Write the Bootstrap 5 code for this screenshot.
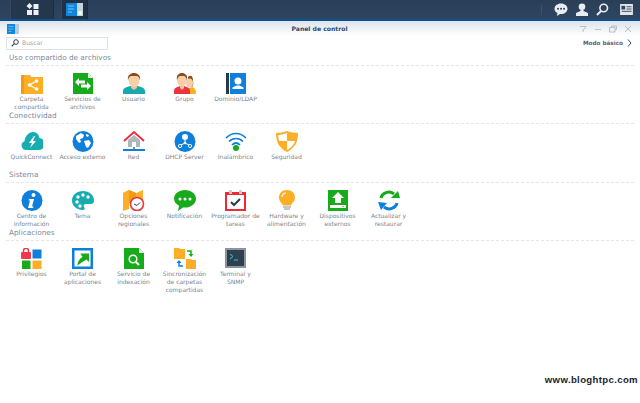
<!DOCTYPE html>
<html lang="es">
<head>
  <meta charset="UTF-8" />
  <title>Panel de control</title>
  <meta name="viewport" content="width=device-width, initial-scale=1" />
  <link href="https://cdn.jsdelivr.net/npm/bootstrap@5.3.0/dist/css/bootstrap.min.css" rel="stylesheet" />
  <style>
    html, body { height: 100%; }
    body { background: #fff; font-family: "DejaVu Sans", Verdana, sans-serif; overflow: hidden; }
    .page { height: 403px; }
    .taskbar { height: 21px; flex: none; background: linear-gradient(#2a3f57, #2f4560); border-bottom: 2px solid #0e4f8c; padding-left: 10px; }
    .task-btn { height: 19px; background: #24374d; border-left: 1px solid #34495f; border-right: 1px solid #1c2c3e; }
    .task-home { width: 44px; }
    .task-app { width: 27px; margin-left: 7px; background: #1f3146; }
    .task-right { gap: 7px; padding-right: 7px; }
    .task-sep { width: 1px; height: 10px; background: #405468; margin-right: 5px; }
    .win-head { height: 15px; flex: none; background: linear-gradient(#dde3eb, #fff); padding: 0 8px 0 7px; }
    .win-side { flex: 1 1 0; }
    .win-title { font-size: 6.1px; font-weight: 700; color: #2f4a6d; }
    .win-ctrl { gap: 7px; }
    .tools { height: 14px; flex: none; padding: 0 8px 0 6px; }
    .search-box { width: 102px; height: 13px; border: 1px solid #dfe3e7; padding-left: 4px; gap: 3px; font-size: 6.1px; color: #a0a6ad; }
    .basic-link { font-size: 5.7px; font-weight: 700; color: #565f74; gap: 4px; }
    .groups { padding: 0 6px; }
    .grp { height: 58.3px; }
    .grp-title { font-size: 7.3px; line-height: 12px; color: #7d8a99; padding: 2px 3px 0; border-bottom: 1px dashed #e4e7ea; height: 16px; }
    .grp-items { padding-top: 7px; }
    .tile { width: 51px; flex: none; text-align: center; font-size: 6px; line-height: 8px; color: #7d858e; }
    .tile svg { display: block; margin: 0 auto 1px; }
    .stamp { font-family: "Liberation Sans", Arial, sans-serif; font-weight: 700; font-size: 9.6px; letter-spacing: .35px; color: #1b2430; padding: 0 2px 16px 0; }
  </style>
</head>
<body>
<div class="page d-flex flex-column">

  <!-- barra superior -->
  <div class="taskbar d-flex align-items-center">
    <div class="task-btn task-home d-flex align-items-center justify-content-center">
      <svg width="13" height="13" viewBox="0 0 13 13"><path d="M3.500 0l3 3-3 3-3-3z" fill="#eef1f4"/><rect x="7.500" y="1" width="5" height="5" fill="#eef1f4"/><rect x="1" y="7" width="5" height="5" fill="#eef1f4"/><rect x="7.500" y="7" width="5" height="5" fill="#eef1f4"/></svg>
    </div>
    <div class="task-btn task-app d-flex align-items-center justify-content-center">
      <svg width="17" height="13" viewBox="0 0 17 13"><rect width="11" height="13" fill="#0f86dc"/><rect x="11" width="6" height="13" fill="#c5d3da"/><rect x="12" y="8" width="4" height="4" fill="#eef2f4"/><path d="M2 3h6M2 6h6M2 9h4" stroke="#7cc2f2"/></svg>
    </div>
    <div class="task-right d-flex align-items-center ms-auto">
      <div class="task-sep"></div>
      <svg width="14" height="13" viewBox="0 0 14 13"><path d="M7 .5c3.700 0 6.500 2.300 6.500 5.200S10.700 11 7 11l-1-.1L3 13l.4-3C1.500 9 .5 7.500 .5 5.700.5 2.800 3.300 .5 7 .5z" fill="#e8edf2"/><circle cx="4" cy="5.700" r="1" fill="#2f4560"/><circle cx="7" cy="5.700" r="1" fill="#2f4560"/><circle cx="10" cy="5.700" r="1" fill="#2f4560"/></svg>
      <svg width="14" height="13" viewBox="0 0 14 13"><circle cx="7" cy="3.700" r="3.300" fill="#e8edf2"/><path d="M5.500 6.500h3v1.500l4.500 2v3H1v-3l4.500-2z" fill="#e8edf2"/></svg>
      <svg width="13" height="13" viewBox="0 0 13 13"><circle cx="7.700" cy="5" r="3.800" fill="none" stroke="#e8edf2" stroke-width="1.600"/><path d="M5 8l-4 4" stroke="#e8edf2" stroke-width="2"/></svg>
      <svg width="13" height="11" viewBox="0 0 14 12" class="ms-1"><rect width="14" height="12" fill="#dfe5ea"/><rect x="1.500" y="2" width="4" height="4" fill="#2f4560"/><path d="M7 3h5.500M7 5.500h5.500M2 8h10.500" stroke="#2f4560"/></svg>
    </div>
  </div>

  <!-- cabecera de la ventana -->
  <div class="win-head d-flex align-items-center">
    <div class="win-side d-flex">
      <svg width="12" height="10" viewBox="0 0 12 10"><rect width="8" height="10" fill="#0f86dc"/><rect x="8" width="4" height="10" fill="#b9cbd5"/><path d="M1.500 2.500h5M1.500 5h5M1.500 7.500h3" stroke="#7cc2f2" stroke-width=".8"/></svg>
    </div>
    <div class="win-title">Panel de control</div>
    <div class="win-side win-ctrl d-flex align-items-center justify-content-end">
      <svg width="8" height="8" viewBox="0 0 8 8"><path d="M1 1.500h6v1L4 5v2" fill="none" stroke="#b7bec6"/></svg>
      <svg width="8" height="8" viewBox="0 0 8 8"><path d="M1 4.500h6" stroke="#b7bec6"/></svg>
      <svg width="8" height="8" viewBox="0 0 8 8"><path d="M2.500 2.500v-1.500h5v3.500H6M.5 2.500h5.500v4.500H.5z" fill="none" stroke="#b7bec6"/></svg>
      <svg width="8" height="8" viewBox="0 0 8 8"><path d="M1 1l6 6M7 1L1 7" stroke="#b7bec6"/></svg>
    </div>
  </div>

  <!-- buscar y modo -->
  <div class="tools d-flex align-items-center justify-content-between">
    <div class="search-box d-flex align-items-center">
      <svg width="8" height="8" viewBox="0 0 8 8"><circle cx="5" cy="3" r="2.300" fill="none" stroke="#2f3d4d"/><path d="M3.300 4.700L.7 7.300" stroke="#2f3d4d" stroke-width="1.200"/></svg>
      Buscar
    </div>
    <div class="basic-link d-flex align-items-center">
      Modo básico
      <svg width="5" height="8" viewBox="0 0 5 8"><path d="M1 .5L4 4 1 7.500" fill="none" stroke="#24507f"/></svg>
    </div>
  </div>

  <div class="groups">

    <div class="grp">
      <div class="grp-title">Uso compartido de archivos</div>
      <div class="grp-items d-flex">
        <div class="tile">
          <svg width="22" height="21" viewBox="0 0 22 21"><path d="M0 2h9l1 2h12v17H0z" fill="#fdae27"/><path d="M0 2h3v19H0z" fill="#f59a18"/><path d="M15.500 8L8.500 12l7 4" fill="none" stroke="#fff" stroke-width="1.200"/><circle cx="15.500" cy="8" r="1.800" fill="#fff"/><circle cx="8.500" cy="12" r="1.800" fill="#fff"/><circle cx="15.500" cy="16" r="1.800" fill="#fff"/></svg>
          Carpeta compartida
        </div>
        <div class="tile">
          <svg width="22" height="21" viewBox="0 0 22 21"><path d="M1 0h15l5 5v16H1z" fill="#17ab1c"/><path d="M16 0l5 5h-5z" fill="#e7f5e7"/><path d="M3 9l4-4v2.500h6v3H7V13zM19 13l-4 4v-2.500H9v-3h6V9z" fill="#fff"/></svg>
          Servicios de archivos
        </div>
        <div class="tile">
          <svg width="22" height="21" viewBox="0 0 22 21"><path d="M0 21v-3c0-3 4-4 7-5h8c3 1 7 2 7 5v3z" fill="#17a9ad"/><path d="M8 12h6v3l-3 2-3-2z" fill="#eec39b"/><ellipse cx="11" cy="7" rx="5.500" ry="7" fill="#f6cfa9"/><path d="M5 7C4 2 8 0 11 0s7 2 6 7c-1-3-2-4-3-4H8C7 3 6 4 5 7z" fill="#8a4b22"/></svg>
          Usuario
        </div>
        <div class="tile">
          <svg width="22" height="21" viewBox="0 0 22 21"><path d="M13 21v-5l5-2c2 .5 4 2 4 7z" fill="#fdae27"/><path d="M14 4c3-3 5 0 5 3s1 5-1 7l-4-1z" fill="#8a4b22"/><ellipse cx="15.500" cy="10" rx="3.500" ry="4.500" fill="#f6cfa9"/><path d="M0 21v-3c0-3 3-4 6-5h4c3 1 6 2 6 5v3z" fill="#e8353f"/><path d="M6 12h4v3l-2 2-2-2z" fill="#eec39b"/><ellipse cx="8" cy="7" rx="5" ry="6.500" fill="#f6cfa9"/><path d="M3 7C2 2 5 0 8 0s6 2 5 7c-1-3-2-4-3-4H6C5 3 4 4 3 7z" fill="#8a4b22"/></svg>
          Grupo
        </div>
        <div class="tile">
          <svg width="20" height="21" viewBox="0 0 20 21"><rect width="3" height="21" fill="#2a3a4b"/><rect x="4" width="16" height="21" fill="#0f7fdc"/><circle cx="12" cy="8" r="3.500" fill="#fff"/><path d="M6.500 16v-1.500l4-2h3l4 2V16z" fill="#fff"/></svg>
          Dominio/LDAP
        </div>
      </div>
    </div>

    <div class="grp">
      <div class="grp-title">Conectividad</div>
      <div class="grp-items d-flex">
        <div class="tile">
          <svg width="22" height="21" viewBox="0 0 22 21"><path d="M5 19a4.500 4.500 0 0 1-1.500-8.700C4 5 8 1 12 1c4 0 6 3 6.500 6A6 6 0 0 1 17 19z" fill="#17adb0"/><path d="M13 5l-5 7h3l-2 5 6-7h-3l2-5z" fill="#fff"/></svg>
          QuickConnect
        </div>
        <div class="tile">
          <svg width="22" height="21" viewBox="0 0 22 21"><circle cx="11" cy="10.500" r="10.500" fill="#0f7fdc"/><path d="M4 5l5-3 3 2-1 3-3 1 1 3-2 1-3-4zM12 10l5-1 2 3-3 5-2-1-1-3zM14 3l3 1-1 2-2-1z" fill="#fff"/></svg>
          Acceso externo
        </div>
        <div class="tile">
          <svg width="22" height="21" viewBox="0 0 22 21"><path d="M5 9l6-5 6 5v7H5z" fill="#aeb7c0"/><rect x="9" y="11" width="4" height="5" fill="#fff"/><path d="M1 10l10-9 10 9" fill="none" stroke="#ee2a36" stroke-width="1.800"/><rect x="10" y="16" width="2" height="2" fill="#7d8893"/><rect y="18" width="22" height="2" fill="#0f7fdc"/></svg>
          Red
        </div>
        <div class="tile">
          <svg width="22" height="21" viewBox="0 0 22 21"><circle cx="11" cy="10.500" r="10.500" fill="#0f7fdc"/><circle cx="11" cy="6" r="3" fill="#fff"/><path d="M11 8v4M11 12l-4 2M11 12l4 2" stroke="#fff"/><circle cx="6" cy="15" r="1.600" fill="none" stroke="#fff"/><circle cx="11" cy="12" r="1.300" fill="#fff"/><circle cx="16" cy="15" r="1.600" fill="none" stroke="#fff"/></svg>
          DHCP Server
        </div>
        <div class="tile">
          <svg width="22" height="21" viewBox="0 0 22 21"><path d="M1 7c6-6 14-6 20 0M4 10.500c4-4 10-4 14 0M7 14c2.500-2.500 5.500-2.500 8 0" fill="none" stroke="#0f7fdc" stroke-width="1.700"/><circle cx="11" cy="17" r="3" fill="#17ab1c"/></svg>
          Inalámbrico
        </div>
        <div class="tile">
          <svg width="22" height="21" viewBox="0 0 22 21"><path d="M0 2c4 0 8-1 11-2 3 1 7 2 11 2 0 9-3 15-11 19C3 17 0 11 0 2z" fill="#fdae27"/><path d="M11 2v8H3C2.500 8 2.300 6 2.200 4 5 4 8 3 11 2zM11 10h8c-1 4-4 7-8 9z" fill="#fff"/></svg>
          Seguridad
        </div>
      </div>
    </div>

    <div class="grp">
      <div class="grp-title">Sistema</div>
      <div class="grp-items d-flex">
        <div class="tile">
          <svg width="22" height="21" viewBox="0 0 22 21"><circle cx="11" cy="10.500" r="10.500" fill="#0f7fdc"/><circle cx="12.500" cy="5" r="2" fill="#fff"/><path d="M8 9h5l-2 7.500h1.500l-.5 1.500H7l2-7.500H7.500z" fill="#fff"/></svg>
          Centro de información
        </div>
        <div class="tile">
          <svg width="22" height="21" viewBox="0 0 22 21"><path d="M11 1C5 1 0 5 0 10.500S5 20 11 20c2 0 2-1.500 1-3s0-3 2-3h5c2 0 3-1.500 3-3.500C22 5 17 1 11 1z" fill="#17adb0"/><circle cx="6" cy="7" r="1.700" fill="#fff"/><circle cx="11" cy="5" r="1.700" fill="#fff"/><circle cx="16" cy="7" r="1.700" fill="#fff"/><circle cx="5" cy="12" r="1.700" fill="#fff"/><circle cx="8" cy="16" r="1.700" fill="#fff"/></svg>
          Tema
        </div>
        <div class="tile">
          <svg width="22" height="21" viewBox="0 0 22 21"><path d="M0 3l6-3 7 3 7-3v12H0z" fill="#fdb22f"/><path d="M6 0l7 3v10H6z" fill="#f59a18"/><path d="M0 3l6-3v19l-6 2z" fill="#fdae27"/><circle cx="14" cy="14" r="6.500" fill="#fff" stroke="#e8353f" stroke-width="1.600"/><path d="M11 14l3 1.500 3-3" fill="none" stroke="#2a3a4b"/></svg>
          Opciones regionales
        </div>
        <div class="tile">
          <svg width="22" height="21" viewBox="0 0 22 21"><path d="M11 0c6 0 11 3.800 11 8.800s-5 8.800-11 8.800l-2-.1L4 21l1-5.300C2 14 0 11.700 0 8.800 0 3.800 5 0 11 0z" fill="#17ab1c"/><circle cx="6" cy="9" r="1.500" fill="#fff"/><circle cx="11" cy="9" r="1.500" fill="#fff"/><circle cx="16" cy="9" r="1.500" fill="#fff"/></svg>
          Notificación
        </div>
        <div class="tile">
          <svg width="22" height="21" viewBox="0 0 22 21"><rect y="2" width="21" height="19" fill="#ee2a36"/><rect x="2" y="5" width="17" height="14" fill="#fff"/><rect x="4" width="3" height="4" fill="#c7ced4"/><rect x="14" width="3" height="4" fill="#c7ced4"/><path d="M6 12l3 3 6-6" fill="none" stroke="#2a3a4b" stroke-width="2"/></svg>
          Programador de tareas
        </div>
        <div class="tile">
          <svg width="22" height="21" viewBox="0 0 22 21"><path d="M11 0c5 0 8 3.500 8 7.500 0 4-3 5-4 8H7c-1-3-4-4-4-8C3 3.500 6 0 11 0z" fill="#fdae27"/><path d="M6 7c0-2 2-4 4-4" stroke="#fff" stroke-width="1.200" fill="none"/><path d="M7 17h8M8 19h6" stroke="#aeb7c0" stroke-width="1.300"/></svg>
          Hardware y alimentación
        </div>
        <div class="tile">
          <svg width="22" height="21" viewBox="0 0 22 21"><rect x="1" width="20" height="21" fill="#17ab1c"/><path d="M11 2l6 6h-3v5H8V8H5z" fill="#fff"/><rect x="3" y="15" width="16" height="3" fill="#fff"/><rect x="15" y="16" width="2" height="1" fill="#fdae27"/></svg>
          Dispositivos externos
        </div>
        <div class="tile">
          <svg width="22" height="21" viewBox="0 0 22 21"><path d="M3 8c1-5 8-8 13-4" fill="none" stroke="#17ab1c" stroke-width="3"/><path d="M13 8h9l-2-7z" fill="#17ab1c"/><path d="M19 13c-1 5-8 8-13 4" fill="none" stroke="#0f7fdc" stroke-width="3"/><path d="M0 12l3 8 6-7z" fill="#0f7fdc"/></svg>
          Actualizar y restaurar
        </div>
      </div>
    </div>

    <div class="grp">
      <div class="grp-title">Aplicaciones</div>
      <div class="grp-items d-flex">
        <div class="tile">
          <svg width="22" height="21" viewBox="0 0 22 21"><rect y="4" width="10" height="7" rx="1" fill="#ee3b49"/><path d="M2.500 4V2.800a2.500 2.500 0 0 1 5 0V4" fill="none" stroke="#ee3b49" stroke-width="1.500"/><rect x="11.500" y="1.500" width="9" height="9" fill="#0f7fdc"/><rect x="1" y="12.500" width="8.500" height="8.500" fill="#17ab1c"/><rect x="11.500" y="12.500" width="9" height="8.500" fill="#fdae27"/></svg>
          Privilegios
        </div>
        <div class="tile">
          <svg width="22" height="21" viewBox="0 0 22 21"><rect width="21" height="21" fill="#0f7fdc"/><rect x="2.500" y="2.500" width="16" height="16" fill="#fff"/><path d="M5.500 17.500C5.500 13 8 10.500 10.500 9L8.500 5.500H17V14l-2.500-2.500c-3 1.500-6 3.500-9 6z" fill="#17ab1c"/></svg>
          Portal de aplicaciones
        </div>
        <div class="tile">
          <svg width="22" height="21" viewBox="0 0 22 21"><path d="M1 0h15l5 5v16H1z" fill="#17ab1c"/><path d="M16 0l5 5h-5z" fill="#e7f5e7"/><circle cx="10" cy="11" r="3.800" fill="none" stroke="#fff" stroke-width="1.500"/><path d="M13 14l3 3" stroke="#fff" stroke-width="2"/></svg>
          Servicio de indexación
        </div>
        <div class="tile">
          <svg width="22" height="21" viewBox="0 0 22 21"><path d="M0 0h5l1 1h5v10H0z" fill="#fdae27"/><path d="M12 11h5l1 1h4v9H12z" fill="#fdae27"/><path d="M13 3h4v4" fill="none" stroke="#17ab1c" stroke-width="1.500"/><path d="M14.500 6h5l-2.500 3z" fill="#17ab1c"/><path d="M9 18H5v-4" fill="none" stroke="#0f7fdc" stroke-width="1.500"/><path d="M2.500 15h5L5 12z" fill="#0f7fdc"/></svg>
          Sincronización de carpetas compartidas
        </div>
        <div class="tile">
          <svg width="22" height="21" viewBox="0 0 22 21"><rect width="21" height="20" fill="#8b959f"/><rect x="2" y="2" width="17" height="16" fill="#2f4150"/><path d="M5 6l3 2.500L5 11" fill="none" stroke="#39c6d0"/><path d="M9 12h4" stroke="#39c6d0"/></svg>
          Terminal y<br>SNMP
        </div>
      </div>
    </div>

  </div>

  <div class="stamp mt-auto text-end">www.bloghtpc.com</div>
</div>
<script src="https://cdn.jsdelivr.net/npm/bootstrap@5.3.0/dist/js/bootstrap.bundle.min.js"></script>
</body>
</html>
